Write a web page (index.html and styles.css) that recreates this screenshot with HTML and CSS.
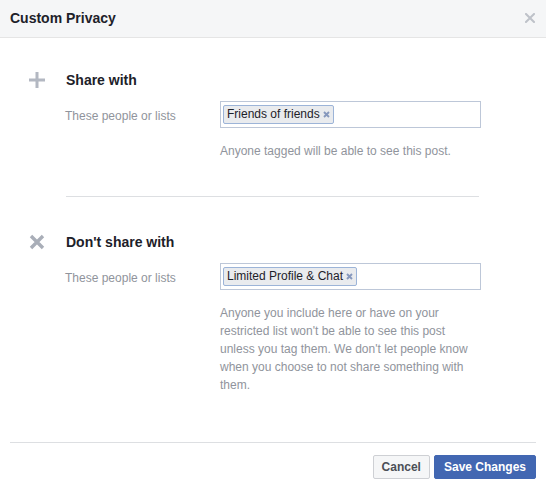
FILE: index.html
```html
<!DOCTYPE html>
<html>
<head>
<meta charset="utf-8">
<link rel="stylesheet" href="styles.css">
</head>
<body>
<div class="dialog">
  <div class="header">
    <div class="title">Custom Privacy</div>
    <svg class="close" width="10" height="10" viewBox="0 0 10 10"><path d="M1 1L9 9M9 1L1 9" stroke="#bec2c9" stroke-width="2" stroke-linecap="square"/></svg>
  </div>
  <div class="body">
    <div class="section">
      <div class="section-head">
        <span class="icon"><svg width="16" height="16" viewBox="0 0 16 16"><path d="M8 0V16M0 8H16" stroke="#b3b8c2" stroke-width="3"/></svg></span>
        <span class="section-title">Share with</span>
      </div>
      <div class="row">
        <div class="label">These people or lists</div>
        <div class="field">
          <div class="input"><span class="tag">Friends of friends<svg class="tag-x" width="7" height="7" viewBox="0 0 7 7"><path d="M1 1L6 6M6 1L1 6" stroke="#8698bd" stroke-width="1.9"/></svg></span></div>
          <p class="help">Anyone tagged will be able to see this post.</p>
        </div>
      </div>
    </div>
    <div class="divider"></div>
    <div class="section">
      <div class="section-head">
        <span class="icon"><svg width="16" height="16" viewBox="0 0 16 16"><path d="M2 2L14 14M14 2L2 14" stroke="#a9aeb8" stroke-width="3.4"/></svg></span>
        <span class="section-title">Don't share with</span>
      </div>
      <div class="row">
        <div class="label">These people or lists</div>
        <div class="field">
          <div class="input"><span class="tag">Limited Profile &amp; Chat<svg class="tag-x" width="7" height="7" viewBox="0 0 7 7"><path d="M1 1L6 6M6 1L1 6" stroke="#8698bd" stroke-width="1.9"/></svg></span></div>
          <p class="help">Anyone you include here or have on your restricted list won't be able to see this post unless you tag them. We don't let people know when you choose to not share something with them.</p>
        </div>
      </div>
    </div>
  </div>
  <div class="footer">
    <button class="btn btn-cancel">Cancel</button>
    <button class="btn btn-save">Save Changes</button>
  </div>
</div>
</body>
</html>
```
FILE: styles.css
```css
* { box-sizing: border-box; }
html, body { margin: 0; padding: 0; background: #fff; }
body { font-family: "Liberation Sans", Arial, Helvetica, sans-serif; font-size: 12px; color: #1d2129; }
.dialog { width: 546px; height: 489px; display: flex; flex-direction: column; }
.header {
  height: 38px; background: #f5f6f7; border-bottom: 1px solid #e5e5e5;
  display: flex; align-items: center; justify-content: space-between;
  padding: 0 11px 1px 10px;
}
.title { font-size: 14px; font-weight: bold; color: #1d2129; line-height: 18px; }
.close { display: block; margin-top: 0; }
.body { flex: 1; padding: 33px 0 0 29px; }
.section-head { display: flex; align-items: center; height: 18px; }
.icon { width: 37px; display: flex; align-items: center; }
.icon svg { display: block; }
.section-title { font-size: 14px; font-weight: bold; line-height: 18px; color: #1d2129; }
.row { display: flex; margin-top: 12px; padding-left: 36px; }
.label { width: 155px; color: #90949c; line-height: 27px; padding-top: 2px; }
.field { width: 261px; }
.input { height: 27px; border: 1px solid #bdc7d8; padding: 3px 2px; display: flex; align-items: flex-start; }
.tag {
  display: inline-flex; align-items: center; height: 19px;
  background: #e9ebee; border: 1px solid #9cb4d8; border-radius: 2px;
  padding: 0 3px 0 3px; color: #1d2129; line-height: 17px;
}
.tag-x { margin-left: 3px; display: block; }
.help { margin: 14px 0 0 0; width: 258px; color: #90949c; line-height: 18px; }
.divider { height: 1px; background: #dddfe2; width: 413px; margin: 36px 0 36px 37px; }
.footer {
  margin: 0 10px; border-top: 1px solid #dddfe2; padding: 12px 0 10px;
  display: flex; justify-content: flex-end; gap: 4px;
}
.btn {
  height: 24px; padding: 0 8px; border: 1px solid; border-radius: 2px;
  font-family: inherit; font-size: 12px; font-weight: bold; line-height: 22px;
}
.btn-cancel { background: #f5f6f7; border-color: #ced0d4; color: #4b4f56; }
.btn-save { background: #4267b2; border-color: #4267b2; color: #fff; padding: 0 9px; }
```
